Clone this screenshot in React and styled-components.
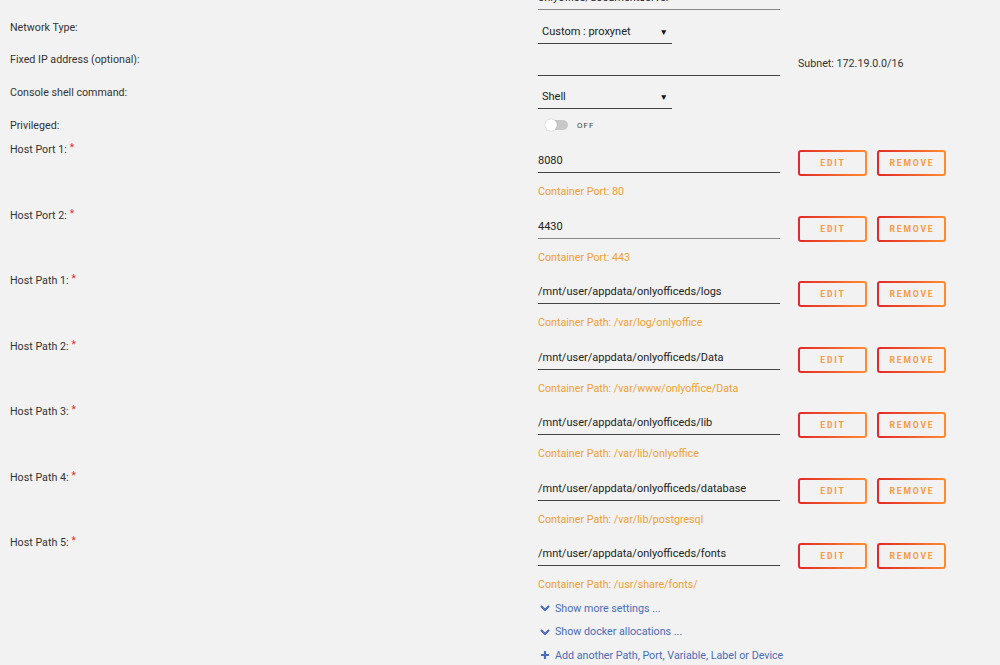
import React from 'react';
import styled, { createGlobalStyle } from 'styled-components';

const GlobalStyle = createGlobalStyle`
  html, body {
    margin: 0;
    padding: 0;
    background: #f2f2f2;
    font-family: Roboto, "Noto Sans", sans-serif;
    overflow: hidden;
  }
`;

const Form = styled.div`
  padding-left: 10px;
  width: 990px;
  height: 665px;
  overflow: hidden;
`;

const Row = styled.div`
  display: grid;
  grid-template-columns: 528px auto;
  align-items: start;
  height: ${p => p.$h}px;
  margin-top: ${p => p.$mt || 0}px;
`;

const Label = styled.div`
  font-size: 10.7px;
  line-height: 20px;
  color: #333;
  padding-top: ${p => p.$pt || 0}px;
`;

const Star = styled.span`
  color: #e22828;
  font-size: 10px;
  margin-left: 3px;
  vertical-align: 2px;
`;

const Control = styled.div`
  display: flex;
  align-items: flex-start;
  padding-top: ${p => p.$pt || 0}px;
`;

const Field = styled.div`
  width: ${p => p.$w || 242}px;
  height: 26px;
  box-sizing: border-box;
  padding-top: 4px;
  line-height: 20px;
  font-size: 11px;
  color: #222;
  border-bottom: 1.5px solid ${p => p.$dark ? '#444' : '#888'};
  white-space: nowrap;
`;

const Select = styled(Field)`
  width: 134px;
  padding-left: 4px;
  padding-right: 4px;
  display: flex;
  justify-content: space-between;
`;

const Arrow = styled.span`
  font-size: 8.5px;
  color: #111;
  line-height: 20px;
`;

const Side = styled.div`
  margin-left: 18px;
  font-size: 10.7px;
  color: #333;
  line-height: 20px;
  padding-top: 4px;
`;

const Buttons = styled.div`
  display: flex;
  gap: 10px;
  margin-left: 18px;
  margin-top: 3px;
`;

const Button = styled.button`
  width: 69px;
  height: 26px;
  box-sizing: border-box;
  border: 2px solid transparent;
  border-radius: 3px;
  background: linear-gradient(#f2f2f2, #f2f2f2) padding-box,
    linear-gradient(90deg, #e22828, #ff8c2f) border-box;
  color: #f79a45;
  font-family: Roboto, "Noto Sans", sans-serif;
  font-size: 8.6px;
  font-weight: 700;
  letter-spacing: 1.8px;
  text-transform: uppercase;
  padding: 0 0 0 1px;
  cursor: pointer;
`;

const Note = styled.div`
  margin-top: 8px;
  font-size: 10.7px;
  line-height: 16px;
  color: #f0a030;
`;

const Toggle = styled.div`
  display: flex;
  align-items: center;
  gap: 9px;
  margin-left: 8px;
  margin-top: 4px;
`;

const Track = styled.span`
  position: relative;
  width: 22px;
  height: 10px;
  border-radius: 5px;
  background: #c8c8c8;
`;

const Knob = styled.span`
  position: absolute;
  left: -1px;
  top: -1px;
  width: 12px;
  height: 12px;
  border-radius: 50%;
  background: #fff;
  box-shadow: 0 0 1px rgba(0,0,0,0.4);
`;

const ToggleText = styled.span`
  font-size: 8px;
  letter-spacing: 1px;
  color: #444;
`;

const Links = styled.div`
  display: flex;
  flex-direction: column;
  margin-left: 528px;
`;

const LinkItem = styled.a`
  display: flex;
  align-items: center;
  gap: 5px;
  height: 23.5px;
  font-size: 10.7px;
  color: #486dba;
  text-decoration: none;
  padding-left: 2px;
`;

const Chevron = () => (
  <svg width="10" height="8" viewBox="0 0 10 8">
    <path d="M1 2 L5 6 L9 2" fill="none" stroke="#486dba" strokeWidth="2.2" />
  </svg>
);

const Plus = () => (
  <svg width="10" height="10" viewBox="0 0 10 10">
    <path d="M5 1 V9 M1 5 H9" fill="none" stroke="#486dba" strokeWidth="2.2" />
  </svg>
);

const entries = [
  { label: 'Host Port 1:', value: '8080', note: 'Container Port: 80', dark: true },
  { label: 'Host Port 2:', value: '4430', note: 'Container Port: 443' },
  { label: 'Host Path 1:', value: '/mnt/user/appdata/onlyofficeds/logs', note: 'Container Path: /var/log/onlyoffice', dark: true },
  { label: 'Host Path 2:', value: '/mnt/user/appdata/onlyofficeds/Data', note: 'Container Path: /var/www/onlyoffice/Data', dark: true },
  { label: 'Host Path 3:', value: '/mnt/user/appdata/onlyofficeds/lib', note: 'Container Path: /var/lib/onlyoffice', dark: true },
  { label: 'Host Path 4:', value: '/mnt/user/appdata/onlyofficeds/database', note: 'Container Path: /var/lib/postgresql', dark: true },
  { label: 'Host Path 5:', value: '/mnt/user/appdata/onlyofficeds/fonts', note: 'Container Path: /usr/share/fonts/', dark: true },
];

export default function App() {
  return (
    <>
      <GlobalStyle />
      <Form>
        <Row $h={34} $mt={-16}>
          <Label />
          <Control>
            <Field>onlyoffice/documentserver</Field>
          </Control>
        </Row>
        <Row $h={32}>
          <Label>Network Type:</Label>
          <Control>
            <Select $dark>Custom : proxynet<Arrow>▼</Arrow></Select>
          </Control>
        </Row>
        <Row $h={33}>
          <Label>Fixed IP address (optional):</Label>
          <Control>
            <Field $dark></Field>
            <Side>Subnet: 172.19.0.0/16</Side>
          </Control>
        </Row>
        <Row $h={33}>
          <Label>Console shell command:</Label>
          <Control>
            <Select $dark>Shell<Arrow>▼</Arrow></Select>
          </Control>
        </Row>
        <Row $h={22}>
          <Label>Privileged:</Label>
          <Toggle>
            <Track><Knob /></Track>
            <ToggleText>OFF</ToggleText>
          </Toggle>
        </Row>
        {entries.map((e, i) => (
          <Row key={i} $h={65.5}>
            <Label>{e.label}<Star>*</Star></Label>
            <div>
              <Control $pt={9}>
                <Field $dark={e.dark}>{e.value}</Field>
                <Buttons>
                  <Button>Edit</Button>
                  <Button>Remove</Button>
                </Buttons>
              </Control>
              <Note>{e.note}</Note>
            </div>
          </Row>
        ))}
        <Links>
          <LinkItem href="#"><Chevron />Show more settings ...</LinkItem>
          <LinkItem href="#"><Chevron />Show docker allocations ...</LinkItem>
          <LinkItem href="#"><Plus />Add another Path, Port, Variable, Label or Device</LinkItem>
        </Links>
      </Form>
    </>
  );
}
